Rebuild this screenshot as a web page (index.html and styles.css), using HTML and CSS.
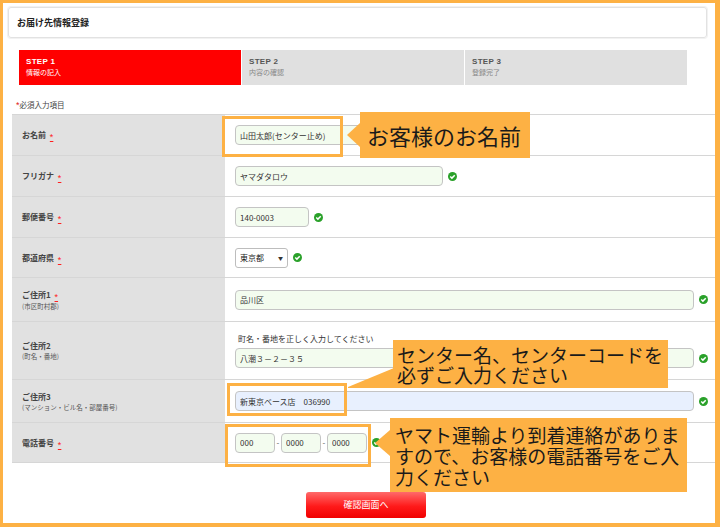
FILE: index.html
```html
<!DOCTYPE html>
<html lang="ja">
<head>
<meta charset="utf-8">
<title>お届け先情報登録</title>
<link rel="stylesheet" href="styles.css">
</head>
<body>
<div class="frame">
  <div class="title-box"><h1>お届け先情報登録</h1></div>

  <div class="steps">
    <div class="step active"><b>STEP 1</b><span>情報の記入</span></div>
    <div class="step"><b>STEP 2</b><span>内容の確認</span></div>
    <div class="step"><b>STEP 3</b><span>登録完了</span></div>
  </div>

  <p class="req"><span class="ast">*</span>必須入力項目</p>

  <div class="form">
    <div class="row h41">
      <div class="label"><div class="lt">お名前 <em>*</em></div></div>
      <div class="field"><input class="in w208" type="text" value="山田太郎(センター止め)"></div>
    </div>
    <div class="row h41">
      <div class="label"><div class="lt">フリガナ <em>*</em></div></div>
      <div class="field"><input class="in w208" type="text" value="ヤマダタロウ"><svg class="ok" viewBox="0 0 10 10"><circle cx="5" cy="5" r="5" fill="#2aa12a"/><path d="M2.5 5.1 L4.3 6.8 L7.5 3.5" stroke="#fff" stroke-width="1.6" fill="none"/></svg></div>
    </div>
    <div class="row h41">
      <div class="label"><div class="lt">郵便番号 <em>*</em></div></div>
      <div class="field"><input class="in w74" type="text" value="140-0003"><svg class="ok" viewBox="0 0 10 10"><circle cx="5" cy="5" r="5" fill="#2aa12a"/><path d="M2.5 5.1 L4.3 6.8 L7.5 3.5" stroke="#fff" stroke-width="1.6" fill="none"/></svg></div>
    </div>
    <div class="row h40">
      <div class="label"><div class="lt">都道府県 <em>*</em></div></div>
      <div class="field"><div class="sel"><span>東京都</span><span class="arr">▼</span></div><svg class="ok" viewBox="0 0 10 10"><circle cx="5" cy="5" r="5" fill="#2aa12a"/><path d="M2.5 5.1 L4.3 6.8 L7.5 3.5" stroke="#fff" stroke-width="1.6" fill="none"/></svg></div>
    </div>
    <div class="row h44">
      <div class="label"><div class="lt">ご住所1 <em>*</em></div><div class="ls">(市区町村郡)</div></div>
      <div class="field"><input class="in w459" type="text" value="品川区"><svg class="ok" viewBox="0 0 10 10"><circle cx="5" cy="5" r="5" fill="#2aa12a"/><path d="M2.5 5.1 L4.3 6.8 L7.5 3.5" stroke="#fff" stroke-width="1.6" fill="none"/></svg></div>
    </div>
    <div class="row h58">
      <div class="label"><div class="lt">ご住所2</div><div class="ls">(町名・番地)</div></div>
      <div class="field col">
        <div class="help">町名・番地を正しく入力してください</div>
        <div class="line"><input class="in w459" type="text" value="八潮３－２－３５"><svg class="ok" viewBox="0 0 10 10"><circle cx="5" cy="5" r="5" fill="#2aa12a"/><path d="M2.5 5.1 L4.3 6.8 L7.5 3.5" stroke="#fff" stroke-width="1.6" fill="none"/></svg></div>
      </div>
    </div>
    <div class="row h43">
      <div class="label"><div class="lt">ご住所3</div><div class="ls">(マンション・ビル名・部屋番号)</div></div>
      <div class="field"><input class="in w459 blue" type="text" value="新東京ベース店　036990"><svg class="ok" viewBox="0 0 10 10"><circle cx="5" cy="5" r="5" fill="#2aa12a"/><path d="M2.5 5.1 L4.3 6.8 L7.5 3.5" stroke="#fff" stroke-width="1.6" fill="none"/></svg></div>
    </div>
    <div class="row h41 last">
      <div class="label"><div class="lt">電話番号 <em>*</em></div></div>
      <div class="field"><input class="in w40" type="text" value="000"><span class="dash">-</span><input class="in w40" type="text" value="0000"><span class="dash">-</span><input class="in w40" type="text" value="0000"><svg class="ok" viewBox="0 0 10 10"><circle cx="5" cy="5" r="5" fill="#2aa12a"/><path d="M2.5 5.1 L4.3 6.8 L7.5 3.5" stroke="#fff" stroke-width="1.6" fill="none"/></svg></div>
    </div>
  </div>

  <div class="actions"><button class="btn" type="button">確認画面へ</button></div>

  <div class="hl hl1"></div>
  <div class="callout c1"><span class="ptr-left"></span>お客様のお名前</div>

  <div class="hl hl2"></div>
  <svg class="wedge" viewBox="0 0 46 20" preserveAspectRatio="none"><polygon points="0,19 46,0 46,20 0,20" fill="#fdb144"/></svg>
  <div class="callout c2"><span class="ln">センター名、センターコードを</span><span class="ln">必ずご入力ください</span></div>

  <div class="hl hl3"></div>
  <div class="callout c3"><span class="ptr-left p3"></span><span class="ln">ヤマト運輸より到着連絡がありま</span><span class="ln">すので、お客様の電話番号をご入</span><span class="ln">力ください</span></div>
</div>
</body>
</html>
```

FILE: styles.css
```css
* { box-sizing: border-box; }
html, body { margin: 0; padding: 0; background: #fff; }
body { font-family: "Noto Sans CJK JP", "Noto Sans", sans-serif; color: #333; }

.frame {
  position: relative;
  width: 720px;
  height: 527px;
  border-style: solid;
  border-color: #fdb144;
  border-width: 3px 5px 4px 3px;
  background: #fff;
  overflow: hidden;
}

.title-box {
  margin: 4px 8px 0 5px;
  height: 31px;
  border: 1px solid #e2e2e2;
  border-radius: 3px;
  box-shadow: 0 0 0 1px #f2f2f2;
  display: flex;
  align-items: center;
  padding-left: 8px;
}
.title-box h1 {
  margin: 0;
  font-size: 9px;
  font-weight: bold;
  color: #222;
}

.steps {
  margin: 12px 0 0 16px;
  display: flex;
  gap: 1px;
  height: 35px;
}
.step {
  width: 222px;
  background: #e0e0e0;
  padding: 7px 0 0 7px;
  display: flex;
  flex-direction: column;
  color: #777;
}
.step b {
  font-family: "Liberation Sans", "Noto Sans CJK JP", sans-serif;
  font-size: 8px;
  line-height: 10px;
  color: #555;
  letter-spacing: 0.3px;
}
.step span { font-size: 7px; line-height: 11px; color: #888; }
.step.active { background: #ff0000; }
.step.active b, .step.active span { color: #fff; }

.req {
  margin: 14px 0 0 13px;
  font-size: 7.5px;
  line-height: 12px;
  color: #444;
}
.ast { color: #e02020; font-family: "Liberation Sans", sans-serif; font-size: 9px; }

.form {
  margin: 3px 0 0 9px;
  border-bottom: 1px solid #d6d6d6;
}
.row {
  display: grid;
  grid-template-columns: 213px 1fr;
  border-top: 1px solid #d6d6d6;
}
.h40 { height: 40px; }
.h41 { height: 41px; }
.h43 { height: 43px; }
.h44 { height: 44px; }
.h58 { height: 58px; }
.row.last { height: 40px; }

.label {
  background: #e1e1e1;
  padding-left: 10px;
  display: flex;
  flex-direction: column;
  justify-content: center;
}
.lt { font-size: 8px; font-weight: bold; color: #444; line-height: 11px; }
.lt em {
  font-style: normal;
  font-family: "Liberation Sans", sans-serif;
  font-size: 9px;
  color: #ff2020;
  text-decoration: underline;
  font-weight: normal;
  margin-left: 2px;
  position: relative;
  top: 2px;
}
.ls { font-size: 6.5px; color: #555; line-height: 10px; }

.field {
  display: flex;
  align-items: center;
  padding-left: 10px;
}
.field.col { flex-direction: column; align-items: flex-start; justify-content: center; }
.line { display: flex; align-items: center; }
.help { font-size: 8px; color: #333; line-height: 12px; margin: 0 0 3px 3px; }

.in {
  height: 20px;
  border: 1px solid #c4c4c4;
  border-radius: 4px;
  background: #f3fcef;
  font-family: "Noto Sans CJK JP", sans-serif;
  font-size: 8px;
  color: #333;
  padding: 0 4px;
  margin: 0;
  outline: none;
}
.in.blue { background: #e8f0fe; }
.w208 { width: 208px; }
.w74 { width: 74px; }
.w459 { width: 459px; }
.w40 { width: 40px; }

.dash { font-size: 8px; color: #555; width: 6px; text-align: center; }

.sel {
  width: 53px;
  height: 20px;
  border: 1px solid #bdbdbd;
  border-radius: 3px;
  background: #fff;
  display: flex;
  align-items: center;
  justify-content: space-between;
  padding: 0 4px 0 4px;
  font-size: 8px;
  color: #222;
}
.sel .arr { font-size: 5px; color: #333; }

.ok { width: 9px; height: 9px; margin-left: 5px; flex: none; }

.actions { margin: 26px 0 0 303px; }
.btn {
  width: 120px;
  height: 26px;
  border: none;
  border-radius: 3px;
  background: linear-gradient(#ff6a6a, #ff1a1a 55%, #f00000);
  color: #fff;
  font-family: "Noto Sans CJK JP", sans-serif;
  font-size: 9px;
  padding: 0;
}

/* annotation overlays */
.hl {
  position: absolute;
  border: 3px solid #fdb144;
}
.hl1 { left: 219px; top: 113px; width: 121px; height: 41px; }
.hl2 { left: 224px; top: 380px; width: 120px; height: 33px; }
.hl3 { left: 222px; top: 421px; width: 146px; height: 43px; }

.callout {
  position: absolute;
  background: #fdb144;
  color: #1a1a1a;
  font-family: "Noto Sans CJK JP", sans-serif;
  font-weight: normal;
}
.callout .ln { display: block; white-space: nowrap; }
.c1 {
  left: 357px; top: 109px; width: 170px; height: 46px;
  font-size: 22px; line-height: 46px; padding-left: 7px;
}
.c2 {
  left: 390px; top: 337px; width: 275px; height: 48px;
  font-size: 19px; line-height: 20px; padding: 5px 0 0 4px;
}
.c3 {
  left: 387px; top: 415px; width: 297px; height: 74px;
  font-size: 19px; line-height: 21px; padding: 6px 0 0 5px;
}
.ptr-left {
  position: absolute;
  left: -13px;
  top: 11px;
  width: 0; height: 0;
  border-top: 12px solid transparent;
  border-bottom: 12px solid transparent;
  border-right: 13px solid #fdb144;
}
.ptr-left.p3 { left: -15px; top: 12px; border-top-width: 13px; border-bottom-width: 13px; border-right-width: 15px; }

.wedge {
  position: absolute;
  left: 345px;
  top: 365px;
  width: 46px;
  height: 20px;
}
```
